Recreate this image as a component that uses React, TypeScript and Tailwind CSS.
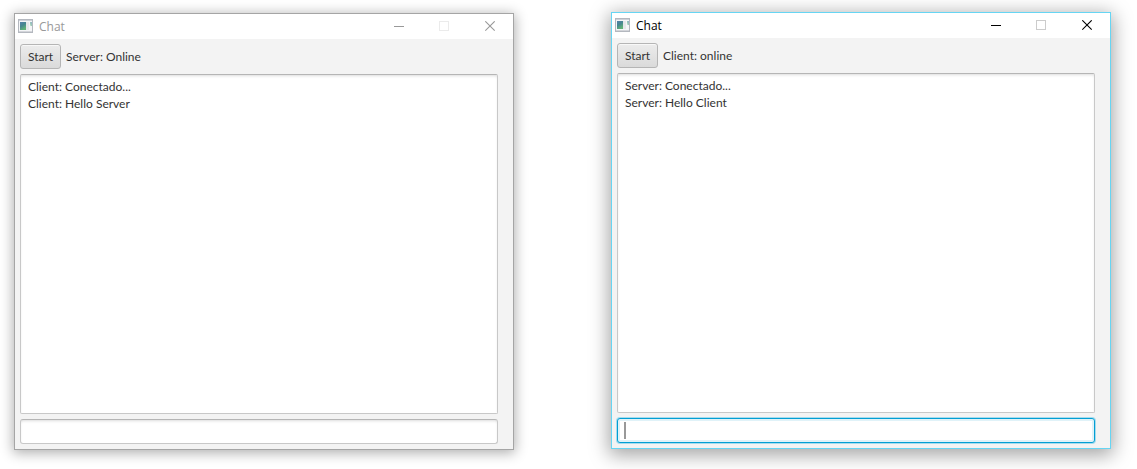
import { useState } from "react";
import clsx from "clsx";

type ChatWindowProps = {
  id: string;
  status: string;
  messages: string[];
  active?: boolean;
  className?: string;
};

function AppIcon({ id }: { id: string }) {
  return (
    <svg className="mb-px" width="15" height="14" viewBox="0 0 15 14" shapeRendering="crispEdges" aria-hidden="true">
      <defs>
        <linearGradient id={`${id}-screen`} x1="0" y1="0" x2="0.5" y2="1">
          <stop offset="0" stopColor="#5580ab" />
          <stop offset="0.5" stopColor="#46868f" />
          <stop offset="1" stopColor="#62b377" />
        </linearGradient>
        <linearGradient id={`${id}-strip`} x1="1" y1="0" x2="0" y2="1">
          <stop offset="0" stopColor="#8fa9d0" />
          <stop offset="0.6" stopColor="#9fcdb6" />
          <stop offset="1" stopColor="#dcebe2" />
        </linearGradient>
      </defs>
      <rect width="15" height="14" fill="#b4b8bf" />
      <rect x="1" y="1" width="13" height="1" fill="#cdd0d8" />
      <rect x="1" y="2" width="13" height="10" fill="#f4f5f7" />
      <rect x="2" y="3" width="6" height="8" fill={`url(#${id}-screen)`} />
      <rect x="8" y="3" width="3" height="8" fill="#e6e7e9" />
      <rect x="12" y="3" width="2" height="4" fill={`url(#${id}-strip)`} />
      <rect x="1" y="12" width="13" height="1" fill="#d3d5da" />
    </svg>
  );
}

function ChatWindow({ id, status, messages, active = false, className }: ChatWindowProps) {
  const [draft, setDraft] = useState("");

  return (
    <section
      aria-labelledby={`${id}-title`}
      className={clsx(
        "flex min-w-0 flex-col border bg-[#f3f3f3]",
        active
          ? "border-[#66d5f3] shadow-[0_4px_18px_2px_rgba(0,0,0,0.36)]"
          : "border-[#a5a5a5] shadow-[0_2px_12px_1px_rgba(0,0,0,0.32)]",
        className,
      )}
    >
      <header
        className={clsx(
          "flex h-[25px] shrink-0 items-center bg-white pl-[3px]",
          active ? "text-black" : "text-[#999999]",
        )}
      >
        <AppIcon id={id} />
        <h1 id={`${id}-title`} className="ml-[6px] flex-1 text-[12px] leading-4">
          Chat
        </h1>
        <button type="button" aria-label="Minimize" className="flex h-full w-[45px] items-center justify-center">
          <svg width="11" height="11" viewBox="0 0 11 11" shapeRendering="crispEdges">
            <path d="M0 5.5H10" stroke="currentColor" />
          </svg>
        </button>
        <button
          type="button"
          aria-label="Maximize"
          disabled
          className={clsx(
            "mr-px flex h-full w-[45px] items-center justify-center",
            active ? "text-[#cccccc]" : "text-[#ebebeb]",
          )}
        >
          <svg width="11" height="11" viewBox="0 0 11 11" shapeRendering="crispEdges">
            <rect x="0.5" y="0.5" width="9" height="9" fill="none" stroke="currentColor" />
          </svg>
        </button>
        <button type="button" aria-label="Close" className="flex h-full w-[45px] items-center justify-center">
          <svg width="11" height="11" viewBox="0 0 11 11">
            <path d="M0.3 0.3L9.7 9.7M9.7 0.3L0.3 9.7" stroke="currentColor" strokeWidth="1.1" />
          </svg>
        </button>
      </header>

      <div className="flex flex-1 flex-col gap-[5px] py-[5px] pr-[15px] pl-[5px] font-[Lato,'Noto_Sans',sans-serif] text-[12px] text-[#333333]">
        <div className="flex items-center gap-[5px]">
          <button
            type="button"
            className="h-[25px] w-[41px] rounded-[3px] border border-[#b5b5b5] bg-linear-to-b from-[#ececec] to-[#dadada] text-center leading-4 shadow-[inset_0_1px_0_#f8f8f8]"
          >
            Start
          </button>
          <span className="leading-4">{status}</span>
        </div>
        <textarea
          readOnly
          aria-label="Messages"
          value={messages.join("\n")}
          className="block w-full flex-1 resize-none rounded-[2px] border border-[#c8c8c8] border-t-[#b5b5b5] bg-white px-[7px] py-[3px] leading-[17px] shadow-[inset_0_2px_3px_-1px_rgba(0,0,0,0.14)] outline-none"
        />
        <div className="relative">
          <input
            type="text"
            aria-label="Message"
            value={draft}
            onChange={(event) => setDraft(event.target.value)}
            className={clsx(
              "block h-[25px] w-full rounded-[3px] border bg-white px-[7px] leading-4 outline-none",
              active
                ? "border-[#039ed3] shadow-[0_0_0_1px_#a6dcee,inset_0_0_0_2px_#e0f2f8]"
                : "border-[#c8c8c8] border-t-[#b5b5b5] shadow-[inset_0_2px_3px_-1px_rgba(0,0,0,0.14)]",
            )}
          />
          {active && draft === "" && (
            <span aria-hidden="true" className="pointer-events-none absolute top-1 left-[7px] h-[17px] w-[2px] bg-[#999999]" />
          )}
        </div>
      </div>
    </section>
  );
}

export default function App() {
  return (
    <main className="grid min-h-screen grid-cols-2 gap-x-[97px] overflow-hidden bg-white pr-[26px] pl-[14px] font-['Open_Sans','Noto_Sans',sans-serif]">
      <ChatWindow
        id="server"
        status="Server: Online"
        messages={["Client: Conectado...", "Client: Hello Server"]}
        className="mt-[13px] mb-[19px]"
      />
      <ChatWindow
        id="client"
        status="Client: online"
        messages={["Server: Conectado...", "Server: Hello Client"]}
        active
        className="mt-3 mb-5"
      />
    </main>
  );
}
